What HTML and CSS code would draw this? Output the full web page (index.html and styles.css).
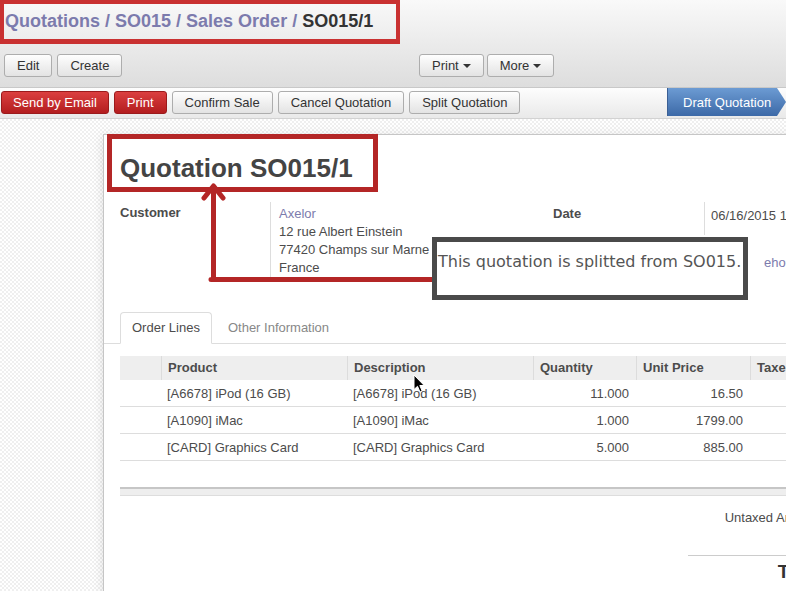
FILE: index.html
```html
<!DOCTYPE html>
<html>
<head>
<meta charset="utf-8">
<title>Quotation SO015/1</title>
<link rel="stylesheet" href="styles.css">
</head>
<body>
<div class="page">
  <header class="vm-header">
    <div class="breadcrumb"><a class="crumb">Quotations</a> / <a class="crumb">SO015</a> / <a class="crumb">Sales Order</a> / <span class="cur">SO015/1</span></div>
    <div class="toolbar">
      <div class="tb-left">
        <button class="btn">Edit</button><button class="btn">Create</button>
      </div>
      <div class="tb-mid">
        <button class="btn">Print<span class="caret"></span></button><button class="btn">More<span class="caret"></span></button>
      </div>
    </div>
  </header>

  <div class="statusbar">
    <div class="actions">
      <button class="btn btn-red btn-email">Send by Email</button>
      <button class="btn btn-red">Print</button>
      <button class="btn">Confirm Sale</button>
      <button class="btn">Cancel Quotation</button>
      <button class="btn">Split Quotation</button>
    </div>
    <div class="states"><span class="state active">Draft Quotation</span></div>
  </div>

  <main class="form-bg">
    <div class="sheet">
      <h1 class="title">Quotation SO015/1</h1>

      <div class="info">
        <div class="group group-left">
          <div class="label">Customer</div>
          <div class="value address">
            <a class="link">Axelor</a><br>
            12 rue Albert Einstein<br>
            77420 Champs sur Marne<br>
            France
          </div>
        </div>
        <div class="group group-right">
          <div class="label">Date</div>
          <div class="value date">06/16/2015 11:02:19</div>
          <div class="label"></div>
          <div class="value extra"><a class="link">ehouse</a></div>
        </div>
      </div>

      <div class="tabs">
        <span class="tab active">Order Lines</span>
        <span class="tab">Other Information</span>
      </div>

      <table class="lines">
        <colgroup>
          <col class="c-handle"><col class="c-prod"><col class="c-desc"><col class="c-qty"><col class="c-price"><col class="c-tax">
        </colgroup>
        <thead>
          <tr><th></th><th>Product</th><th>Description</th><th>Quantity</th><th>Unit Price</th><th>Taxes</th></tr>
        </thead>
        <tbody>
          <tr><td></td><td>[A6678] iPod (16 GB)</td><td>[A6678] iPod (16 GB)</td><td class="num">11.000</td><td class="num">16.50</td><td></td></tr>
          <tr><td></td><td>[A1090] iMac</td><td>[A1090] iMac</td><td class="num">1.000</td><td class="num">1799.00</td><td></td></tr>
          <tr><td></td><td>[CARD] Graphics Card</td><td>[CARD] Graphics Card</td><td class="num">5.000</td><td class="num">885.00</td><td></td></tr>
        </tbody>
      </table>
      <div class="list-foot"></div>

      <div class="totals">
        <div class="trow"><span class="tlabel">Untaxed Amount :</span><span class="tval">2,875.50</span></div>
        <div class="trow total"><span class="tlabel">Total:</span><span class="tval">2,875.50</span></div>
      </div>
    </div>
  </main>

  <!-- annotations -->
  <div class="note-box note-crumb"></div>
  <div class="note-box note-title"></div>
  <svg class="note-arrow" width="240" height="100" viewBox="0 0 240 100">
    <path d="M13.5 97.5 L13.5 5 M4 16 L13.5 4 L23 16 M11 97.5 L235 97.5" fill="none" stroke="#b42626" stroke-width="5" stroke-linecap="round" stroke-linejoin="round"/>
  </svg>
  <div class="callout">This quotation is splitted from SO015.</div>

  <svg class="cursor" width="13" height="20" viewBox="0 0 13 20">
    <path d="M1 1 L1 15.5 L4.5 12.3 L7 18 L9.2 17 L6.8 11.5 L11.2 11.5 Z" fill="#000" stroke="#fff" stroke-width="1"/>
  </svg>
</div>
</body>
</html>
```

FILE: styles.css
```css
* { box-sizing: border-box; }
html, body { margin: 0; padding: 0; }
body {
  font-family: "Liberation Sans", Arial, sans-serif;
  font-size: 13px;
  color: #4c4c4c;
  background: #fff;
}
.page {
  position: relative;
  width: 786px;
  height: 591px;
  overflow: hidden;
  background: #fff;
}

/* header */
.vm-header {
  height: 88px;
  background: linear-gradient(#f9f9f9, #dddddd);
  border-bottom: 1px solid #c8c8c8;
}
.breadcrumb {
  padding: 9px 0 0 5px;
  font-size: 18px;
  font-weight: bold;
  line-height: 24px;
  color: #7c7bad;
  white-space: nowrap;
}
.crumb { color: #7c7bad; }
.breadcrumb .cur { color: #333; }
.toolbar {
  display: grid;
  grid-template-columns: 415px auto;
  margin-top: 21px;
  padding-left: 4px;
}
.btn {
  display: inline-flex;
  align-items: center;
  height: 23px;
  padding: 0 12px;
  margin: 0 5px 0 0;
  border: 1px solid #adadad;
  border-radius: 3px;
  background: linear-gradient(#fefefe, #e3e3e3);
  font-family: "Liberation Sans", Arial, sans-serif;
  font-size: 13px;
  color: #333;
  vertical-align: top;
}
.tb-mid .btn { margin-right: 3px; }
.caret {
  display: inline-block;
  width: 0;
  height: 0;
  margin-left: 4px;
  border-top: 4px solid #333;
  border-left: 4px solid transparent;
  border-right: 4px solid transparent;
}
.btn-red {
  background: linear-gradient(#db3f3f, #b31d1f);
  border-color: #9b1a1c;
  color: #fff;
}
.btn-email { padding: 0 11px; }

/* statusbar */
.statusbar {
  display: flex;
  height: 31px;
  background: linear-gradient(#fdfdfd, #e9e9e9);
  border-bottom: 1px solid #d2d2d2;
}
.actions {
  padding: 3px 0 0 1px;
  white-space: nowrap;
  font-size: 0;
}
.actions .btn { margin-right: 5px; }
.states {
  margin-left: auto;
  display: flex;
}
.state.active {
  display: flex;
  align-items: center;
  width: 119px;
  height: 28px;
  padding-left: 15px;
  background: linear-gradient(#6c9bd3, #3c69a7);
  border-left: 1px solid #3b5f94;
  color: #fff;
  font-size: 13px;
  clip-path: polygon(0 0, calc(100% - 9px) 0, 100% 50%, calc(100% - 9px) 100%, 0 100%);
}

/* form */
.form-bg {
  height: 472px;
  padding: 15px 0 0 103px;
  background: repeating-conic-gradient(#efefef 0 25%, #ffffff 0 50%) 0 0 / 4px 4px;
}
.sheet {
  width: 900px;
  min-height: 480px;
  background: #fff;
  border: 1px solid #c6c6c6;
  box-shadow: 0 2px 10px rgba(0,0,0,0.12);
  padding: 16px 16px 40px 16px;
}
.title {
  margin: 0;
  font-size: 26px;
  line-height: 34px;
  font-weight: bold;
  color: #444;
}
.info {
  display: flex;
  margin-top: 17px;
}
.group {
  display: grid;
  align-content: start;
  line-height: 18px;
}
.group-left {
  width: 433px;
  grid-template-columns: 150px 1fr;
}
.group-right {
  width: 350px;
  grid-template-columns: 151px 1fr;
}
.label {
  font-weight: bold;
  padding-top: 2px;
}
.group-right .label { padding-top: 3px; }
.value {
  border-left: 1px solid #dddddd;
  padding: 3px 0 0 8px;
}
.value.date {
  padding: 5px 0 0 6px;
  height: 33px;
  white-space: nowrap;
}
.value.extra {
  border-left: none;
  padding: 19px 0 0 60px;
}
.link { color: #7c7bad; }

.tabs {
  display: flex;
  margin: 35px -16px 0 -16px;
  padding-left: 16px;
  border-bottom: 1px solid #dddddd;
  height: 32px;
}
.tab {
  height: 32px;
  padding: 0 11px;
  line-height: 30px;
  border: 1px solid transparent;
  border-radius: 4px 4px 0 0;
  color: #888;
  margin-right: 4px;
  white-space: nowrap;
}
.tab.active {
  border-color: #dddddd;
  border-bottom-color: #fff;
  background: #fff;
  color: #4c4c4c;
}

.lines {
  margin-top: 12px;
  border-collapse: separate;
  border-spacing: 0;
  table-layout: fixed;
  width: 780px;
}
.c-handle { width: 41px; }
.c-prod { width: 186px; }
.c-desc { width: 186px; }
.c-qty { width: 103px; }
.c-price { width: 114px; }
.c-tax { width: 150px; }
.lines th {
  height: 24px;
  padding: 0 6px 1px 6px;
  background: #eeeeee;
  text-align: left;
  font-weight: bold;
  border-left: 1px solid #dcdcdc;
  white-space: nowrap;
  vertical-align: middle;
}
.lines th:first-child { border-left: none; }
.lines td {
  height: 27px;
  padding: 0 6px;
  border-bottom: 1px solid #dddddd;
  white-space: nowrap;
  vertical-align: middle;
}
.lines td.num {
  text-align: right;
  padding-right: 7px;
}
.list-foot {
  width: 780px;
  height: 9px;
  margin-top: 26px;
  background: #eeeeee;
  border-top: 2px solid #c6c6c6;
  border-bottom: 1px solid #dddddd;
}

.totals {
  margin-left: 568px;
  width: 260px;
}
.trow {
  display: grid;
  grid-template-columns: 140px 1fr;
  line-height: 18px;
}
.trow:first-child { margin-top: 13px; }
.tlabel {
  text-align: right;
  white-space: nowrap;
}
.tval {
  text-align: right;
}
.trow.total {
  margin-top: 28px;
  border-top: 1px solid #cccccc;
  padding-top: 4px;
  font-size: 19px;
  line-height: 24px;
  font-weight: bold;
  color: #333;
}

/* annotations */
.note-box {
  position: absolute;
  background: transparent;
}
.note-crumb {
  left: 0;
  top: 0;
  width: 400px;
  height: 44px;
  border: 4px solid #c93131;
  border-bottom-width: 5px;
}
.note-title {
  left: 107px;
  top: 134px;
  width: 271px;
  height: 58px;
  border: 5px solid #b42626;
}
.note-arrow {
  position: absolute;
  left: 200px;
  top: 182px;
}
.callout {
  position: absolute;
  left: 432px;
  top: 237px;
  width: 316px;
  height: 63px;
  border: 5px solid #4a4a4a;
  background: #fff;
  padding: 10px 0 0 1px;
  font-family: "DejaVu Sans", sans-serif;
  font-size: 16px;
  line-height: 19px;
  color: #555;
  white-space: nowrap;
}
.cursor {
  position: absolute;
  left: 413px;
  top: 374px;
}
```
